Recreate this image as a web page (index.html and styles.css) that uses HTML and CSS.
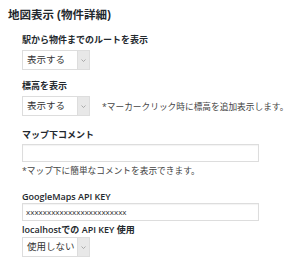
FILE: index.html
```html
<!DOCTYPE html>
<html lang="ja">

<head>
  <meta charset="utf-8">
  <title>地図表示 (物件詳細)</title>
  <link rel="stylesheet" href="styles.css">
</head>

<body>
  <h2 class="title">地図表示 (物件詳細)</h2>
  <div class="fields">
    <label class="label first">駅から物件までのルートを表示</label>
    <div class="row">
      <div class="select">
        <span class="select-value">表示する</span>
        <span class="select-arrow">
          <svg width="5" height="3" viewBox="0 0 5 3"><path d="M0.5 0.5 L2.5 2.5 L4.5 0.5" fill="none" stroke="#999" stroke-width="0.8"/></svg>
        </span>
      </div>
    </div>

    <label class="label">標高を表示</label>
    <div class="row">
      <div class="select">
        <span class="select-value">表示する</span>
        <span class="select-arrow">
          <svg width="5" height="3" viewBox="0 0 5 3"><path d="M0.5 0.5 L2.5 2.5 L4.5 0.5" fill="none" stroke="#999" stroke-width="0.8"/></svg>
        </span>
      </div>
      <span class="note">*マーカークリック時に標高を追加表示します。</span>
    </div>

    <label class="label comment">マップ下コメント</label>
    <div class="text-input"></div>
    <p class="hint">*マップ下に簡単なコメントを表示できます。</p>

    <label class="label api">GoogleMaps API KEY</label>
    <div class="text-input key">xxxxxxxxxxxxxxxxxxxxxxxx</div>
    <label class="label local">localhostでの API KEY 使用</label>
    <div class="row">
      <div class="select">
        <span class="select-value">使用しない</span>
        <span class="select-arrow">
          <svg width="5" height="3" viewBox="0 0 5 3"><path d="M0.5 0.5 L2.5 2.5 L4.5 0.5" fill="none" stroke="#999" stroke-width="0.8"/></svg>
        </span>
      </div>
    </div>
  </div>
</body>

</html>
```

FILE: styles.css
```css
body {
  margin: 0;
  padding: 8px;
  background-color: #fff;
  color: #23282d;
  font-family: 'Open Sans', 'Noto Sans CJK JP', sans-serif;
}

.title {
  margin: 0;
  font-size: 11.5px;
  line-height: 14px;
  font-weight: bold;
}

.fields {
  padding-left: 14px;
}

.label {
  display: block;
  font-size: 9px;
  line-height: 12px;
  font-weight: 600;
  margin-top: 10px;
  margin-bottom: 4px;
}

.label.first {
  margin-top: 12px;
}

.label.comment {
  margin-top: 13px;
  margin-bottom: 3px;
}

.label.api {
  margin-top: 14px;
  margin-bottom: 0;
}

.label.local {
  margin-top: 3px;
  margin-bottom: 1px;
}

.row {
  display: flex;
  align-items: center;
}

.select {
  display: flex;
  width: 68px;
  height: 20px;
  box-sizing: border-box;
  border: 1px solid #ddd;
  background-color: #fff;
}

.select-value {
  flex: 1;
  padding-left: 4px;
  font-size: 9.5px;
  line-height: 18px;
  color: #333;
}

.select-arrow {
  display: flex;
  align-items: center;
  justify-content: center;
  width: 11px;
  background-color: #e8e8e8;
  border-left: 1px solid #ddd;
}

.note {
  margin-left: 12px;
  font-size: 8.7px;
  color: #444;
}

.text-input {
  width: 237px;
  height: 18px;
  box-sizing: border-box;
  border: 1px solid #ddd;
  box-shadow: inset 0 1px 1px rgba(0, 0, 0, 0.05);
  padding-left: 3px;
  font-size: 8px;
  line-height: 16px;
  color: #333;
}

.hint {
  margin: 3px 0 0;
  font-size: 8.7px;
  line-height: 12px;
  color: #444;
}
```
